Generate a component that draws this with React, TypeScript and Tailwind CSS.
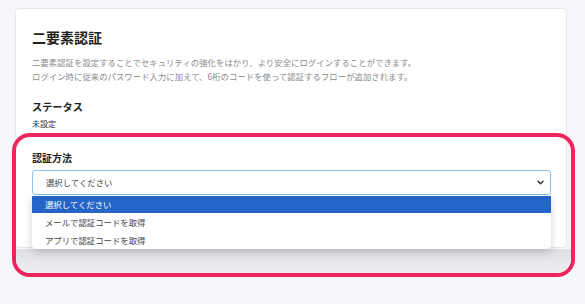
export default function App() {
  return (
    <div
      className="relative w-[585px] h-[304px] overflow-hidden bg-[#f5f6fa] pl-[15px] pr-[18px] pt-[8px]"
      style={{ fontFamily: '"Noto Sans CJK JP", "Noto Sans", sans-serif' }}
    >
      {/* Card */}
      <div className="relative rounded-[4px] border border-[#e6e7eb] bg-white pl-[16px] pr-[15px] pt-[17px] pb-[52px]">
        <h2 className="text-[14px] leading-[22px] font-bold text-[#222]">二要素認証</h2>
        <p className="mt-[7px] text-[8.3px] leading-[14px] text-[#8a8a8a] tracking-[0.1px]">
          二要素認証を設定することでセキュリティの強化をはかり、より安全にログインすることができます。
          <br />
          ログイン時に従来のパスワード入力に加えて、6桁のコードを使って認証するフローが追加されます。
        </p>

        <h3 className="mt-[16px] text-[10.2px] leading-[16px] font-bold text-[#222]">ステータス</h3>
        <p className="mt-[2px] text-[8px] leading-[14px] text-[#333]">未設定</p>

        <label className="mt-[19px] block text-[10px] leading-[16px] font-bold text-[#222]">認証方法</label>
        <div className="relative mt-[4px]">
          <div className="flex h-[25px] items-center justify-between rounded-[3px] border border-[#8ec3ee] bg-white pl-[13px] pr-[6px]">
            <span className="text-[8.4px] text-[#444]">選択してください</span>
            <svg width="7" height="5" viewBox="0 0 8 6" fill="none">
              <path d="M1 1.5 L4 4.5 L7 1.5" stroke="#333" strokeWidth="1.8" strokeLinecap="round" strokeLinejoin="round" />
            </svg>
          </div>

          {/* Open option list */}
          <div className="absolute left-0 right-0 top-[26px] z-10 overflow-hidden rounded-b-[4px] bg-white shadow-[0_3px_8px_rgba(0,0,0,0.18)]">
            <div className="flex h-[17px] items-center bg-[#2665c8] pl-[13px] text-[8.4px] text-white">選択してください</div>
            <div className="flex h-[18px] items-center pl-[13px] text-[8.4px] text-[#444]">メールで認証コードを取得</div>
            <div className="flex h-[18px] items-center pl-[13px] text-[8.4px] text-[#444]">アプリで認証コードを取得</div>
          </div>
        </div>
      </div>

      {/* Highlight annotation */}
      <div className="pointer-events-none absolute left-[12px] top-[133px] h-[144px] w-[563px] overflow-hidden rounded-[18px] border-4 border-[#f0245c]">
        <div className="absolute left-0 right-0 top-[112px] bottom-0 bg-gradient-to-b from-[#dfe0e4] to-[#eceef2]" />
      </div>
    </div>
  );
}
